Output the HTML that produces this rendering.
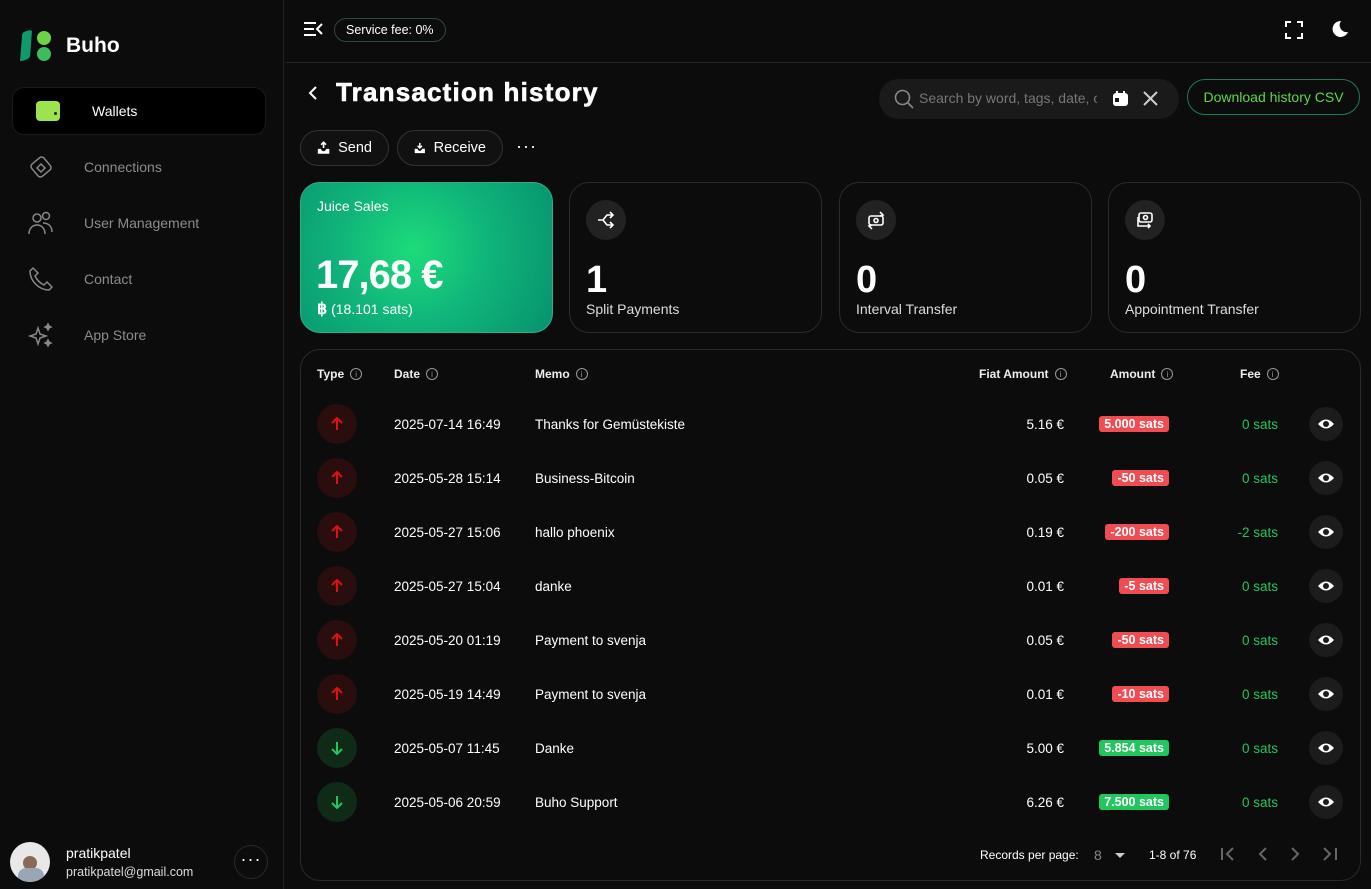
<!DOCTYPE html>
<html><head><meta charset="utf-8"><style>
*{box-sizing:border-box;margin:0;padding:0}
body{width:1371px;height:889px;background:#0c0c0c;font-family:"Liberation Sans",sans-serif;color:#fff;position:relative;overflow:hidden}
.abs{position:absolute}
.side{left:0;top:0;width:284px;height:889px;border-right:1px solid #232323;background:#0c0c0c}
.nav{left:28px;font-size:14px;color:#8c8c8c;display:flex;align-items:center}
.nav span{position:absolute;left:56px;white-space:nowrap}
.top{left:285px;top:62px;width:1086px;height:1px;background:#232323}
.card{border:1px solid #2a2a2a;border-radius:20px;height:151px;top:182px;width:253px}
.ic{position:absolute;left:16px;top:17px;width:40px;height:40px;border-radius:50%;background:#222;display:flex;align-items:center;justify-content:center}
.num{position:absolute;left:16px;top:76px;font-size:38px;font-weight:bold}
.lab{position:absolute;left:16px;top:118px;font-size:14px;color:#ddd}
.th{top:367px;font-size:12px;font-weight:bold;color:#eee;display:flex;align-items:center;gap:6px}
.i{width:12px;height:12px;border:1px solid #999;border-radius:50%;font-size:8px;color:#999;display:inline-flex;align-items:center;justify-content:center;font-weight:normal}
.row{position:absolute;left:301px;width:1058px;height:54px;font-size:13.5px}
.row>*{position:absolute}
.tp{left:16px;top:7px;width:40px;height:40px;border-radius:50%;display:flex;align-items:center;justify-content:center;font-size:16px}
.out{background:#2a0d0d;color:#e01010}
.in{background:#0f2a17;color:#22c55e}
.c{top:20px}
.b{top:19px;right:190px;font-size:12.5px;font-weight:bold;padding:1px 5px;border-radius:3px}
.r{background:#f04d52}.g{background:#22c55e}
.fee{right:81px;top:20px;color:#22c55e}
.eye{right:16px;top:10px;width:34px;height:34px;border-radius:50%;background:#1c1c1c;display:flex;align-items:center;justify-content:center}
.pill{border:1px solid #333;border-radius:18px;height:36px;top:130px;display:flex;align-items:center;gap:8px;font-size:14.5px;padding:0 16px;background:#111}
</style></head><body>
<div class="abs side">
 <svg class="abs" style="left:20px;top:29px" width="32" height="33" viewBox="0 0 32 33"><path d="M4 3 Q10 0 12 2 L10 28 Q6 32 0 32 L2 8 Q2 4 4 3Z" fill="#0f9a6a"/><circle cx="24" cy="9" r="7" fill="#6dd24a"/><circle cx="24" cy="25" r="7" fill="#3dbb5e"/></svg>
 <div class="abs" style="left:66px;top:34px;font-size:21px;font-weight:bold">Buho</div>
 <div class="abs" style="left:12px;top:87px;width:254px;height:48px;background:#000;border-radius:12px;border:1px solid #1a1a1a"></div>
 <div class="abs" style="left:36px;top:101px;width:24px;height:20px;background:#9de24f;border-radius:4px"><div style="position:absolute;right:3px;top:11px;width:3px;height:3px;background:#222;border-radius:50%"></div></div>
 <div class="abs" style="left:92px;top:103px;font-size:14px">Wallets</div>
 <div class="abs nav" style="top:154px;height:26px"><svg width="26" height="26" viewBox="0 0 26 26" fill="none" stroke="#888" stroke-width="1.5"><rect x="5" y="5" width="16" height="16" rx="3" transform="rotate(-40 13 13)"/><path d="M9 14l4-4 4 4-4 4z"/></svg><span>Connections</span></div>
 <div class="abs nav" style="top:210px;height:26px"><svg width="26" height="26" viewBox="0 0 26 26" fill="none" stroke="#888" stroke-width="1.5"><circle cx="9" cy="8" r="4"/><circle cx="18" cy="6" r="3.5"/><path d="M1 24c0-6 4-9 8-9s8 3 8 9M15 13c5 0 9 3 9 9"/></svg><span>User Management</span></div>
 <div class="abs nav" style="top:266px;height:26px"><svg width="26" height="26" viewBox="0 0 26 26" fill="none" stroke="#888" stroke-width="1.5"><path d="M5 2l5 5-3 3c2 4 5 7 9 9l3-3 5 5-3 3C11 24 2 15 2 5z"/></svg><span>Contact</span></div>
 <div class="abs nav" style="top:322px;height:26px"><svg width="26" height="26" viewBox="0 0 26 26" fill="none" stroke="#888" stroke-width="1.5"><path d="M10 6l2 6 6 2-6 2-2 6-2-6-6-2 6-2z"/><path d="M20 2l1 2 2 1-2 1-1 2-1-2-2-1 2-1zM20 18l1 2 2 1-2 1-1 2-1-2-2-1 2-1z" fill="#888"/></svg><span>App Store</span></div>
 <div class="abs" style="left:10px;top:842px;width:40px;height:40px;border-radius:50%;background:#e8e8e8;overflow:hidden"><div style="position:absolute;left:13px;top:14px;width:14px;height:14px;border-radius:50%;background:#8a6a55"></div><div style="position:absolute;left:8px;top:26px;width:26px;height:20px;border-radius:8px;background:#9aa6b4"></div></div>
 <div class="abs" style="left:66px;top:845px;font-size:14px">pratikpatel</div>
 <div class="abs" style="left:66px;top:865px;font-size:12.5px;color:#ddd">pratikpatel@gmail.com</div>
 <div class="abs" style="left:234px;top:845px;width:34px;height:34px;border:1px solid #2a2a2a;border-radius:50%;text-align:center;line-height:26px;font-size:18px;letter-spacing:1px">···</div>
</div>
<div class="abs top"></div>
<svg class="abs" style="left:303px;top:21px" width="20" height="16" viewBox="0 0 20 16" stroke="#fff" stroke-width="2" fill="none"><path d="M1 2h12M1 8h10M1 14h12M19 3l-5 5 5 5"/></svg>
<div class="abs" style="left:334px;top:18px;height:24px;border:1px solid #2e4a3c;border-radius:12px;padding:0 11px;font-size:12.5px;line-height:22px">Service fee: 0%</div>
<svg class="abs" style="left:1285px;top:21px" width="18" height="18" viewBox="0 0 18 18" stroke="#fff" stroke-width="2" fill="none"><path d="M1 6V1h5M12 1h5v5M17 12v5h-5M6 17H1v-5"/></svg>
<svg class="abs" style="left:1331px;top:20px" width="18" height="18" viewBox="0 0 18 18"><path d="M10 1a8 8 0 1 0 7 11 7 7 0 0 1-7-11z" fill="#fff"/></svg>
<svg class="abs" style="left:308px;top:85px" width="10" height="16" viewBox="0 0 10 16" stroke="#fff" stroke-width="2" fill="none"><path d="M8 2L2 8l6 6"/></svg>
<div class="abs" style="left:336px;top:77px;font-size:26px;font-weight:bold;letter-spacing:1.2px;-webkit-text-stroke:0.6px #fff">Transaction history</div>
<div class="abs" style="left:879px;top:79px;width:300px;height:40px;border-radius:20px;background:#1a1a1a"></div>
<svg class="abs" style="left:894px;top:89px" width="20" height="20" viewBox="0 0 20 20" stroke="#888" stroke-width="1.6" fill="none"><circle cx="8.5" cy="8.5" r="7"/><path d="M14 14l5 5"/></svg>
<div class="abs" style="left:919px;top:90px;width:178px;overflow:hidden;white-space:nowrap;font-size:14px;color:#777">Search by word, tags, date, or</div>
<svg class="abs" style="left:1112px;top:90px" width="17" height="17" viewBox="0 0 17 17"><rect x="1" y="3" width="15" height="13" rx="3" fill="#fff"/><path d="M5 1v3M12 1v3" stroke="#fff" stroke-width="2"/><rect x="3" y="8" width="4" height="4" fill="#1a1a1a"/><rect x="1" y="5" width="15" height="2" fill="#fff"/></svg>
<svg class="abs" style="left:1143px;top:91px" width="15" height="15" viewBox="0 0 15 15" stroke="#ccc" stroke-width="2"><path d="M1 1l13 13M14 1L1 14"/></svg>
<div class="abs" style="left:1187px;top:79px;width:173px;height:36px;border:1px solid #1d7a55;border-radius:18px;color:#5fd64a;font-size:14px;text-align:center;line-height:34px">Download history CSV</div>
<div class="abs pill" style="left:300px;width:89px"><svg width="16" height="16" viewBox="0 0 16 16"><path d="M8 1v7M5 4l3-3 3 3" stroke="#fff" stroke-width="2" fill="none"/><path d="M1 9h4a3 3 0 0 0 6 0h4v6H1z" fill="#fff"/></svg>Send</div>
<div class="abs pill" style="left:397px;width:106px"><svg width="16" height="16" viewBox="0 0 16 16"><path d="M8 1v7M5 5l3 3 3-3" stroke="#fff" stroke-width="2" fill="none"/><path d="M1 9h4a3 3 0 0 0 6 0h4v6H1z" fill="#fff"/></svg>Receive</div>
<div class="abs" style="left:516px;top:136px;font-size:18px;letter-spacing:1px">···</div>
<div class="abs card" style="left:300px;border-color:#2fae85;background:radial-gradient(circle at 45% 45%,#1ddc7a 0%,#10b57a 45%,#07926f 100%)">
 <div class="abs" style="left:16px;top:15px;font-size:14px">Juice Sales</div>
 <div class="abs" style="left:15px;top:70px;font-size:40px;font-weight:bold;letter-spacing:-1px">17,68 €</div>
 <div class="abs" style="left:16px;top:116px;font-size:14px"><b style="font-size:16px">฿</b> (18.101 sats)</div>
</div>
<div class="abs card" style="left:569px"><div class="ic"><svg width="20" height="20" viewBox="0 0 20 20" stroke="#fff" stroke-width="1.6" fill="none"><path d="M2 10h5l4-5h6M7 10l4 5h6M14 2l3 3-3 3M14 12l3 3-3 3"/></svg></div><div class="num">1</div><div class="lab">Split Payments</div></div>
<div class="abs card" style="left:839px"><div class="ic"><svg width="20" height="20" viewBox="0 0 20 20" stroke="#fff" stroke-width="1.6" fill="none"><rect x="3" y="6" width="14" height="9" rx="2"/><circle cx="10" cy="10.5" r="2"/><path d="M14 2l3 3-3 1M6 19l-3-3 3-1"/></svg></div><div class="num">0</div><div class="lab">Interval Transfer</div></div>
<div class="abs card" style="left:1108px"><div class="ic"><svg width="20" height="20" viewBox="0 0 20 20" stroke="#fff" stroke-width="1.6" fill="none"><rect x="4" y="3" width="13" height="9" rx="2"/><circle cx="10.5" cy="7.5" r="2"/><path d="M3 7v9h12M13 14l2 2-2 2"/></svg></div><div class="num">0</div><div class="lab">Appointment Transfer</div></div>
<div class="abs" style="left:300px;top:349px;width:1061px;height:532px;border:1px solid #2a2a2a;border-radius:20px"></div>
<div class="abs th" style="left:317px">Type <span class="i">i</span></div>
<div class="abs th" style="left:394px">Date <span class="i">i</span></div>
<div class="abs th" style="left:535px">Memo <span class="i">i</span></div>
<div class="abs th" style="left:979px">Fiat Amount <span class="i">i</span></div>
<div class="abs th" style="left:1110px">Amount <span class="i">i</span></div>
<div class="abs th" style="left:1240px">Fee <span class="i">i</span></div>

<div class="row" style="top:397px"><div class="tp out"><svg width="12" height="14" viewBox="0 0 12 14" stroke="currentColor" stroke-width="2" fill="none"><path d="M6 13V2M1 6l5-5 5 5"/></svg></div><div class="c" style="left:93px">2025-07-14 16:49</div><div class="c" style="left:234px">Thanks for Gemüstekiste</div><div class="c" style="right:295px">5.16 €</div><div class="b r">5.000 sats</div><div class="fee">0 sats</div><div class="eye"><svg width="18" height="12" viewBox="0 0 18 12"><path d="M1 6Q9-3 17 6Q9 15 1 6z" fill="#fff"/><circle cx="9" cy="6" r="3" fill="#1c1c1c"/></svg></div></div>
<div class="row" style="top:451px"><div class="tp out"><svg width="12" height="14" viewBox="0 0 12 14" stroke="currentColor" stroke-width="2" fill="none"><path d="M6 13V2M1 6l5-5 5 5"/></svg></div><div class="c" style="left:93px">2025-05-28 15:14</div><div class="c" style="left:234px">Business-Bitcoin</div><div class="c" style="right:295px">0.05 €</div><div class="b r">-50 sats</div><div class="fee">0 sats</div><div class="eye"><svg width="18" height="12" viewBox="0 0 18 12"><path d="M1 6Q9-3 17 6Q9 15 1 6z" fill="#fff"/><circle cx="9" cy="6" r="3" fill="#1c1c1c"/></svg></div></div>
<div class="row" style="top:505px"><div class="tp out"><svg width="12" height="14" viewBox="0 0 12 14" stroke="currentColor" stroke-width="2" fill="none"><path d="M6 13V2M1 6l5-5 5 5"/></svg></div><div class="c" style="left:93px">2025-05-27 15:06</div><div class="c" style="left:234px">hallo phoenix</div><div class="c" style="right:295px">0.19 €</div><div class="b r">-200 sats</div><div class="fee">-2 sats</div><div class="eye"><svg width="18" height="12" viewBox="0 0 18 12"><path d="M1 6Q9-3 17 6Q9 15 1 6z" fill="#fff"/><circle cx="9" cy="6" r="3" fill="#1c1c1c"/></svg></div></div>
<div class="row" style="top:559px"><div class="tp out"><svg width="12" height="14" viewBox="0 0 12 14" stroke="currentColor" stroke-width="2" fill="none"><path d="M6 13V2M1 6l5-5 5 5"/></svg></div><div class="c" style="left:93px">2025-05-27 15:04</div><div class="c" style="left:234px">danke</div><div class="c" style="right:295px">0.01 €</div><div class="b r">-5 sats</div><div class="fee">0 sats</div><div class="eye"><svg width="18" height="12" viewBox="0 0 18 12"><path d="M1 6Q9-3 17 6Q9 15 1 6z" fill="#fff"/><circle cx="9" cy="6" r="3" fill="#1c1c1c"/></svg></div></div>
<div class="row" style="top:613px"><div class="tp out"><svg width="12" height="14" viewBox="0 0 12 14" stroke="currentColor" stroke-width="2" fill="none"><path d="M6 13V2M1 6l5-5 5 5"/></svg></div><div class="c" style="left:93px">2025-05-20 01:19</div><div class="c" style="left:234px">Payment to svenja</div><div class="c" style="right:295px">0.05 €</div><div class="b r">-50 sats</div><div class="fee">0 sats</div><div class="eye"><svg width="18" height="12" viewBox="0 0 18 12"><path d="M1 6Q9-3 17 6Q9 15 1 6z" fill="#fff"/><circle cx="9" cy="6" r="3" fill="#1c1c1c"/></svg></div></div>
<div class="row" style="top:667px"><div class="tp out"><svg width="12" height="14" viewBox="0 0 12 14" stroke="currentColor" stroke-width="2" fill="none"><path d="M6 13V2M1 6l5-5 5 5"/></svg></div><div class="c" style="left:93px">2025-05-19 14:49</div><div class="c" style="left:234px">Payment to svenja</div><div class="c" style="right:295px">0.01 €</div><div class="b r">-10 sats</div><div class="fee">0 sats</div><div class="eye"><svg width="18" height="12" viewBox="0 0 18 12"><path d="M1 6Q9-3 17 6Q9 15 1 6z" fill="#fff"/><circle cx="9" cy="6" r="3" fill="#1c1c1c"/></svg></div></div>
<div class="row" style="top:721px"><div class="tp in"><svg width="12" height="14" viewBox="0 0 12 14" stroke="currentColor" stroke-width="2" fill="none"><path d="M6 1v11M1 8l5 5 5-5"/></svg></div><div class="c" style="left:93px">2025-05-07 11:45</div><div class="c" style="left:234px">Danke</div><div class="c" style="right:295px">5.00 €</div><div class="b g">5.854 sats</div><div class="fee">0 sats</div><div class="eye"><svg width="18" height="12" viewBox="0 0 18 12"><path d="M1 6Q9-3 17 6Q9 15 1 6z" fill="#fff"/><circle cx="9" cy="6" r="3" fill="#1c1c1c"/></svg></div></div>
<div class="row" style="top:775px"><div class="tp in"><svg width="12" height="14" viewBox="0 0 12 14" stroke="currentColor" stroke-width="2" fill="none"><path d="M6 1v11M1 8l5 5 5-5"/></svg></div><div class="c" style="left:93px">2025-05-06 20:59</div><div class="c" style="left:234px">Buho Support</div><div class="c" style="right:295px">6.26 €</div><div class="b g">7.500 sats</div><div class="fee">0 sats</div><div class="eye"><svg width="18" height="12" viewBox="0 0 18 12"><path d="M1 6Q9-3 17 6Q9 15 1 6z" fill="#fff"/><circle cx="9" cy="6" r="3" fill="#1c1c1c"/></svg></div></div>

<div class="abs" style="left:980px;top:848px;font-size:12px">Records per page:</div>
<div class="abs" style="left:1094px;top:847px;font-size:14px;color:#888">8</div>
<div class="abs" style="left:1115px;top:853px;width:0;height:0;border-left:5px solid transparent;border-right:5px solid transparent;border-top:5px solid #ccc"></div>
<div class="abs" style="left:1149px;top:848px;font-size:12px">1-8 of 76</div>
<svg class="abs" style="left:1221px;top:847px" width="120" height="14" viewBox="0 0 120 14" stroke="#666" stroke-width="2" fill="none"><path d="M1 1v12M12 1L6 7l6 6M45 1l-6 6 6 6M71 1l6 6-6 6M103 1l6 6-6 6M115 1v12"/></svg>
</body></html>
